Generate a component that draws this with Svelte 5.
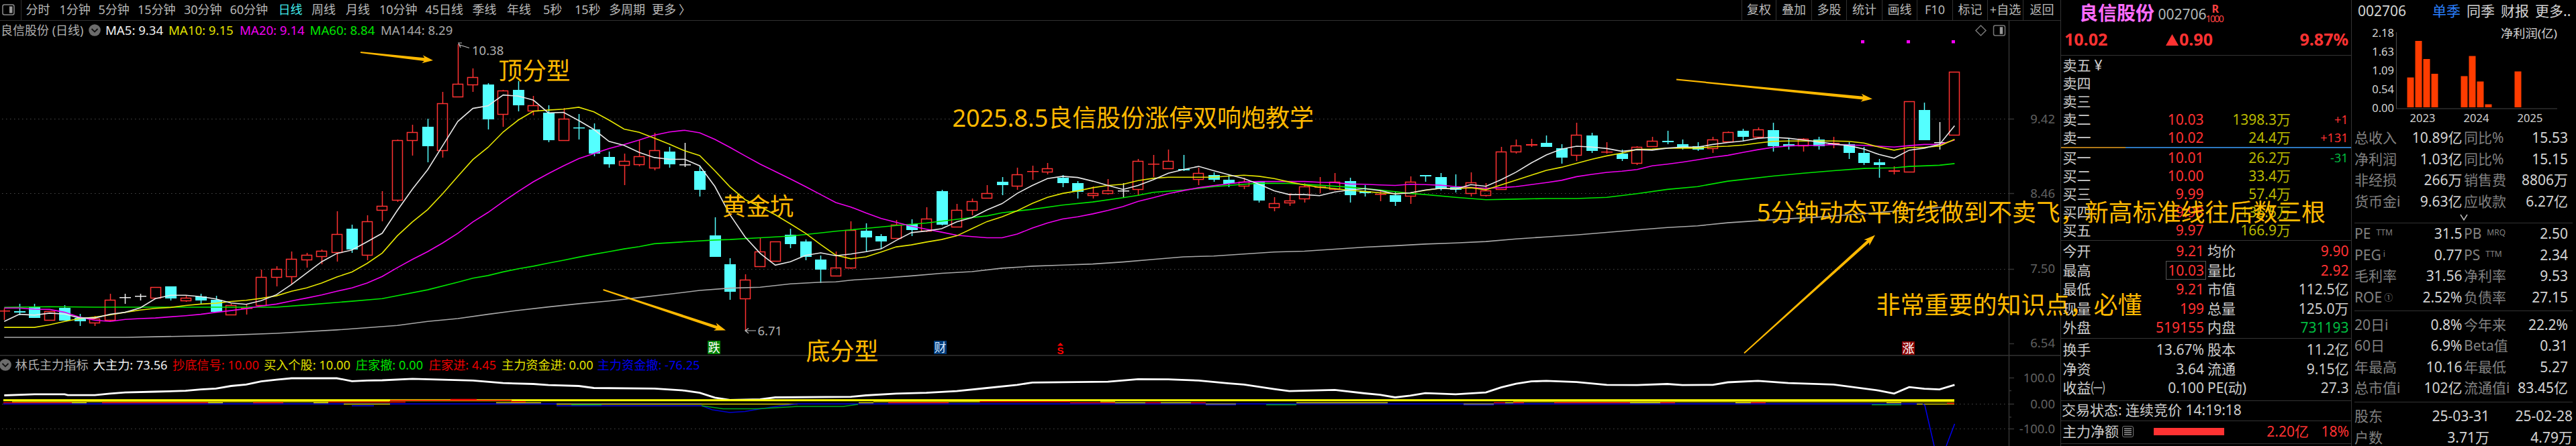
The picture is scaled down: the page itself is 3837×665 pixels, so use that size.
<script>
  const periods = [['分时',50],['1分钟',58],['5分钟',58.5],['15分钟',69],['30分钟',68.5],['60分钟',72],['日线',49.5],['周线',51],['月线',50],['10分钟',68.5],['45日线',70],['季线',51.4],['年线',54],['5秒',47],['15秒',51],['多周期',64],['更多',40],['〉',20]];
  const tools = [['复权',51],['叠加',53],['多股',52],['统计',53],['画线',52],['F10',53],['标记',52],['+自选',53],['返回',56]];
  const averages = [['MA5: 9.34','#f0f0f0',94],['MA10: 9.15','#e0e000',106],['MA20: 9.14','#f000f0',104.6],['MA60: 8.84','#00e600',105.4],['MA144: 8.29','#a8a8a8',120]];
  const signals = [['林氏主力指标','#b0b0b0',116.3],['大主力: 73.56','#f0f0f0',118.2],['抄底信号: 10.00','#e60000',136],['买入个股: 10.00','#e0e000',136.8],['庄家撤: 0.00','#00e600',109],['庄家进: 4.45','#f00000',108.2],['主力资金进: 0.00','#e0e000',142.6],['主力资金撤: -76.25','#0000f0',170]];

  // The plot is laid out on a vertical grid of 2.358 units per pixel, one slot per trading day.
  const Y = 2.358;
  const px = (i) => 6.3 + 22.52 * i;
  const py = (v) => v / Y;

  // kind high low bodyTop bodyBottom
  const raw = `r 1085 1125 1091 1095|c 1068 1108 1094 1100|c 1068 1118 1081 1117|r 1094 1124 1094 1124|c 1072 1128 1082 1127|c 1104 1145 1118 1130|r 1110 1145 1119 1135|r 1033 1130 1055 1124|w 1032 1068 1045 1045|w 1032 1056 1039 1039|r 1010 1047 1010 1047|c 1008 1056 1008 1049|r 1038 1060 1046 1056|c 1033 1068 1043 1056|c 1041 1098 1054 1096|r 1068 1106 1074 1106|r 1070 1106 1083 1083|r 947 1075 974 1074|r 937 1008 945 975|r 884 1000 910 971|r 890 940 896 912|r 876 930 882 900|r 743 919 822 886|c 789 890 803 877|r 757 915 779 897|r 673 777 723 738|r 491 710 493 702|r 439 547 465 494|c 417 570 446 513|r 322 554 362 529|r 155 342 294 339|r 241 324 270 296|c 293 456 297 420|r 315 445 319 402|c 285 392 315 371|r 337 405 371 388|c 371 501 397 492|r 380 494 418 494|c 400 490 447 447|c 435 550 454 540|c 534 590 552 577|r 539 650 567 579|r 493 585 549 577|r 467 600 528 590|c 516 590 534 577|w 502 586 578 578|c 583 692 601 668|c 764 902 828 902|c 908 1053 930 1025|r 965 1160 984 1049|r 837 936 885 936|r 850 918 850 918|c 803 873 825 858|c 842 915 849 902|c 898 996 912 947|r 884 968 942 968|r 779 946 808 942|c 785 886 811 834|c 824 875 831 848|r 774 838 791 837|c 771 830 788 809|r 729 816 768 811|c 667 792 672 791|r 718 799 737 798|r 698 757 708 738|r 651 695 680 695|c 622 686 640 650|r 590 668 613 653|r 583 632 602 602|r 573 614 591 604|c 615 658 626 643|c 637 697 644 674|r 655 699 678 685|r 630 684 669 678|w 644 694 669 669|r 558 688 567 664|r 545 622 575 578|r 527 594 567 591|c 545 601 595 600|r 590 650 609 629|c 607 640 616 632|c 613 657 633 646|r 624 665 640 654|c 640 711 640 706|r 694 742 715 728|r 680 724 705 713|r 644 711 656 699|r 622 679 656 660|r 608 670 638 664|c 626 711 637 685|c 650 690 673 678|r 671 707 681 684|c 671 725 685 710|r 619 717 638 688|c 616 640 616 621|c 608 669 622 665|c 612 676 657 668|r 605 690 641 678|r 644 690 670 685|r 516 668 532 666|r 490 541 511 533|r 488 516 507 511|c 477 516 502 516|c 506 576 520 555|r 431 566 475 544|c 467 538 477 530|r 499 540 532 536|c 527 565 541 558|r 513 580 517 572|r 481 516 496 515|c 460 508 495 501|c 490 525 506 519|c 499 530 514 526|r 481 538 491 522|r 462 500 465 497|c 453 497 460 480|r 449 485 454 480|c 431 533 457 513|c 487 527 506 514|r 485 533 489 512|c 481 525 491 515|r 481 522 502 506|c 499 559 506 538|c 516 579 538 572|c 559 626 570 579|r 585 614 600 604|r 355 603 355 603|c 361 494 386 492|w 428 526 500 500|r 252 477 253 475`;
  const tone = { r: '#ff3232', c: '#54ffff', w: '#f0f0f0' };
  const candles = raw.split('|').map((s, i) => {
    const [k, h, l, t, b] = s.split(' ');
    const top = Math.round(py(+t)), bot = Math.round(py(+b));
    return { k, x: Math.round(px(i)), hi: Math.round(py(+h)), lo: Math.round(py(+l)), top, bot, color: tone[k] };
  });

  const dense = (s) => s.split(' ').map((v, i) => `${px(i).toFixed(1)},${py(+v).toFixed(1)}`).join(' ');
  const sparse = (s) => s.split(' ').map((p) => { const [i, v] = p.split(':'); return `${px(+i).toFixed(1)},${py(+v).toFixed(1)}`; }).join(' ');

  const ma5 = dense('1130 1105 1108 1101 1104 1118 1118 1105 1098 1082 1050 1038 1038 1043 1051 1065 1070 1057 1036 1000 960 920 891 879 850 820 740 665 597 512 427 381 372 334 338 352 397 395 424 455 497 511 536 554 560 560 583 655 755 833 891 932 920 898 889 899 893 885 875 845 818 812 804 780 765 738 716 680 652 628 620 624 637 652 666 652 632 609 596 585 600 614 628 648 671 684 684 688 675 668 663 670 682 678 668 662 665 649 655 632 605 573 545 524 514 517 522 532 526 528 521 517 517 508 501 496 486 483 486 492 499 506 512 524 543 556 528 521 508 442');
  const ma10 = dense('1151 1151 1151 1142 1130 1120 1115 1107 1098 1090 1084 1081 1074 1069 1066 1060 1056 1049 1040 1024 1012 995 974 956 926 890 829 780 737 681 620 561 518 464 422 391 387 384 377 393 422 454 465 486 507 530 547 600 657 702 727 755 787 820 860 897 910 903 886 868 861 851 842 829 804 779 762 741 715 694 680 671 660 652 648 635 627 623 623 623 623 619 616 620 628 640 650 658 663 669 673 678 681 678 669 662 663 660 667 650 633 616 599 588 574 560 548 538 525 524 521 521 521 516 514 510 503 497 496 496 496 496 497 503 517 528 518 518 513 490');
  const ma20 = dense('1083 1083 1087 1088 1098 1115 1126 1130 1123 1120 1118 1114 1110 1105 1098 1092 1085 1076 1069 1058 1048 1037 1024 1012 995 972 941 912 885 854 820 780 747 709 673 639 610 583 558 540 522 508 492 475 464 458 467 490 518 548 577 603 629 656 684 712 728 749 768 782 795 806 816 827 832 836 836 823 802 784 770 762 752 740 726 708 695 681 670 660 653 646 640 638 638 638 638 641 642 647 648 650 652 648 649 651 656 659 662 660 656 649 642 634 621 613 606 602 596 583 577 570 562 553 546 536 526 518 513 511 511 508 510 511 514 517 512 508 508 492');
  const ma60 = sparse('0:1081 3:1078 6:1080 18:1080 20:1072 23:1059 25:1050 28:1019 30:992 31:978 32:969 33:956 34:945 35:936 36:925 37:915 38:904 39:894 40:885 41:875 42:867 43:857 45:850 47:844 48:842 50:836 52:830 54:819 55:813 57:803 59:793 61:784 63:771 65:759 66:748 68:736 70:721 72:710 74:695 75:687 76:676 78:668 80:656 82:648 83:644 85:645 87:651 89:658 91:668 93:680 94:684 96:694 98:702 100:700 102:698 104:698 106:694 108:681 110:666 112:656 114:637 115:631 117:619 119:609 121:600 123:592 125:590 126:585 128:581 129:575');
  const ma144 = sparse('0:1186 8:1186 10:1184 14:1180 18:1172 22:1160 26:1144 28:1130 30:1120 32:1105 34:1091 36:1079 38:1068 40:1058 42:1046 44:1034 46:1021 48:1013 50:1010 52:998 54:992 55:991 56:985 58:978 60:970 62:961 64:955 66:943 68:936 70:932 72:928 74:921 76:912 78:903 80:900 82:893 84:886 86:883 88:876 90:869 92:864 94:858 96:854 98:849 100:840 102:833 104:826 106:817 108:808 110:800 112:794 114:783 116:776 118:769 120:763 122:755 124:747 126:738 128:729 129:724');
  const power = sparse('0:1390 2:1386 4:1386 4.2:1389 6:1389 7:1384 8:1380 10:1377 12:1374 13:1369 14:1366 15:1357 16:1352 17:1341 18:1335 19:1330 22:1330 23:1340 24:1338 25:1337 27:1332 29:1335 31:1338 33:1347 35:1350 36:1354 38:1357 39:1364 43:1366 45:1373 46:1381 47:1398 48:1406 50:1404 51:1397 56:1395 57:1390 59:1384 61:1381 63:1375 65:1364 67:1353 68:1345 73:1342 75:1333 77:1334 79:1338 81:1348 82:1352 84:1368 85:1375 88:1371 90:1383 91:1388 92:1397 93:1391 94:1382 96:1386 98:1380 99:1362 100:1349 101:1341 102:1339 104:1343 106:1353 108:1354 110:1350 111:1354 113:1353 114:1344 116:1339 118:1347 121:1352 124:1373 125:1384 126:1361 127:1367 128:1369 129:1353');

  // x1 x2 y colour
  const strips = [[5,107,600.5,'r'],[18,580,599,'y'],[152,310,600.5,'r'],[107,129,600.5,'y'],[310,332,600.5,'y'],[377,422,600.5,'r'],[467,489,600.5,'y'],[489,604,599.5,'r'],[512,581,602.5,'y'],[524,557,605,'b'],[581,762,597,'r'],[671,710,595.5,'r'],[739,806,600.5,'y'],[761,783,599,'r'],[829,1188,602.5,'y'],[829,1045,605,'b'],[851,896,603.5,'g'],[1279,1301,600.5,'y'],[1301,1460,599,'y'],[1323,1413,600.5,'r'],[1459,1594,599,'r'],[1594,1661,600.5,'r'],[1639,1661,599,'y'],[1661,1706,600.5,'y'],[1706,1729,600.5,'r'],[1729,1774,600.5,'y'],[1774,1796,600.5,'r'],[1796,1841,602.5,'y'],[1796,1841,603.5,'b'],[1886,1931,603.5,'g'],[1931,2067,600.5,'y'],[2180,2225,602.5,'y'],[2180,2225,603.5,'b'],[2225,2242,600.5,'r'],[2242,2254,600.5,'y'],[2254,2911,599,'y'],[2254,2270,600.5,'r'],[2315,2428,600.5,'r'],[2428,2473,600.5,'y'],[2473,2495,600.5,'r'],[2585,2608,600.5,'y'],[2608,2630,600.5,'r'],[2788,2832,603.5,'g'],[2810,2832,600.5,'y'],[2855,2911,602.5,'y'],[2900,2911,601.5,'r']];
  const ink = { r: '#f00000', y: '#d8d000', b: '#0000e8', g: '#00a820' };

  const axis = [[177,'9.42'],[288,'8.46'],[400.5,'7.50'],[511.5,'6.54'],[563,'100.0'],[602,'0.00'],[639.5,'-100.0']];
  const notes = [[742.5,119,'顶分型',107],[1075.5,320.5,'黄金坑',107],[1200.5,536.5,'底分型',108],[1418.5,189,'2025.8.5良信股份涨停双响炮教学',538.5],[2617,329.5,'5分钟动态平衡线做到不卖飞，新高标准线往后数三根',847],[2794.5,467.5,'非常重要的知识点，必懂',396]];
  const arrows = [[537,78,645,90,6,16],[898.5,432,1081,492.5,6,17],[2497,118.5,2789,147.5,6,17],[2598,526.5,2793,350.5,6,17]];
  const arrowPath = ([x1, y1, x2, y2, w, h]) => {
    const d = Math.hypot(x2 - x1, y2 - y1), u = (x2 - x1) / d, v = (y2 - y1) / d;
    const p = (a, b) => `${(x1 + u * a - v * b).toFixed(1)} ${(y1 + v * a + u * b).toFixed(1)}`;
    return `M${p(0, -0.9)}L${p(d - h + 3, -w / 2 + 0.7)}L${p(d - h, -w)}L${p(d, 0)}L${p(d - h, w)}L${p(d - h + 3, w / 2 - 0.7)}L${p(0, 0.9)}Z`;
  };

  const asks = [['卖五','','',''],['卖四','','',''],['卖三','','',''],['卖二','10.03','1398.3万','+1'],['卖一','10.02','24.4万','+131']];
  const bids = [['买一','10.01','26.2万','-31'],['买二','10.00','33.4万',''],['买三','9.99','57.4万',''],['买四','9.98','136.5万',''],['买五','9.97','166.9万','']];
  const statsA = [['今开','9.21','r','均价','9.90','r'],['最高','10.03','r box','量比','2.92','r'],['最低','9.21','r','市值','112.5亿',''],['现量','199','r','总量','125.0万',''],['外盘','519155','r','内盘','731193','g']];
  const statsB = [['换手','13.67%','','股本','11.2亿',''],['净资','3.64','','流通','9.15亿',''],['收益㈠','0.100','','PE(动)','27.3','']];

  const finA = [['总收入','','10.89亿','同比%','','15.53'],['净利润','','1.03亿','同比%','','15.15'],['非经损','','266万','销售费','','8806万'],['货币金i','','9.63亿','应收款','','6.27亿']];
  const finB = [['PE','TTM','31.5','PB','MRQ','2.50'],['PEG','i','0.77','PS','TTM','2.34'],['毛利率','','31.56','净利率','','9.53'],['ROE','①','2.52%','负债率','','27.15']];
  const finC = [['20日i','','0.8%','今年来','','22.2%'],['60日','','6.9%','Beta值','','0.31'],['年最高','','10.16','年最低','','5.27'],['总市值i','','102亿','流通值i','','83.45亿']];
  const bars = [[82,67],[94,12.5],[106,39.5],[118,61.5],[162,65],[174,35],[186,73],[198,107],[242,58]];
</script>

{#snippet finRows(rows)}
  {#each rows as [a, as, av, b, bs, bv]}
    <div class="frow"><span class="fl">{a}{#if as}<sup class:tight={as === 'i' || as === '①'} class:ring={as === '①'}>{as}</sup>{/if}</span><span class="fv">{av}</span><span class="fl">{b}{#if bs}<sup>{bs}</sup>{/if}</span><span class="fv">{bv}</span></div>
  {/each}
{/snippet}

{#snippet chevron()}
  <svg class="chev" width="18" height="18" viewBox="0 0 18 18"><circle cx="9" cy="9" r="8.8" fill="#6c6c6c"/><path d="M4.5 7L9 11.5L13.5 7" fill="none" stroke="#111" stroke-width="1.8"/></svg>
{/snippet}

<main>
  <section class="market">
    <nav>
      <div class="panel-icon"><svg width="19" height="17" viewBox="0 0 19 17"><rect x="1" y="1" width="17" height="15" rx="2.5" fill="none" stroke="#8a8a8a" stroke-width="1.5"/><rect x="11" y="3.5" width="4.5" height="10" fill="#9a9a9a"/></svg></div>
      <div class="periods">
        {#each periods as [label, w]}<span class:active={label === '日线'} style:width="{w}px">{label}</span>{/each}
      </div>
      <div class="tools">
        {#each tools as [label, w]}<span style:width="{w}px">{label}</span>{/each}
      </div>
    </nav>

    <div class="stage">
      <svg class="plot" width="3069" height="634" viewBox="0 31 3069 634">
        <g stroke="#4a4a4a" stroke-width="1" stroke-dasharray="1.5 4.5">
          <path d="M3 177.5H2992M3 288.5H2992M3 401.5H2992M3 602.5H2992M3 639.5H2992"/>
        </g>
        <g stroke="#333" stroke-width="1.5" fill="none">
          <path d="M0 530H3069M2992.5 31V665"/>
          <path d="M2993 177.5H3000M2993 288.5H3000M2993 401.5H3000M2993 512.5H3000M2993 563.5H3000M2993 582.5H2996M2993 602.5H3000M2993 622H2996M2993 639.5H3000"/>
        </g>
        {#each candles as c}
          <g stroke={c.color} fill="none" stroke-width="1.5">
            {#if c.k === 'r' && c.bot - c.top > 2}
              <path d="M{c.x + 0.5} {c.hi}V{c.top}M{c.x + 0.5} {c.bot}V{c.lo}"/>
              <rect x={c.x - 7.5} y={c.top + 0.5} width="15" height={c.bot - c.top}/>
            {:else}
              <path d="M{c.x + 0.5} {c.hi}V{c.lo}"/>
              <rect x={c.x - 8} y={c.top} width="17" height={Math.max(1.5, c.bot - c.top)} fill={c.color} stroke="none"/>
            {/if}
          </g>
        {/each}
        <g fill="none" stroke-width="1.6">
          <polyline points={ma144} stroke="#a8a8a8"/>
          <polyline points={ma60} stroke="#00e600"/>
          <polyline points={ma20} stroke="#f000f0"/>
          <polyline points={ma10} stroke="#e6e600"/>
          <polyline points={ma5} stroke="#e8e8e8"/>
        </g>
        <g fill="#f0f"><rect x="2772" y="60" width="5" height="4.5"/><rect x="2840" y="60" width="5" height="4.5"/><rect x="2907" y="60" width="5" height="4.5"/></g>
        <g stroke="#c0c0c0" fill="none" stroke-width="1.2">
          <path d="M699 71.5L683 66.5M688 64H683L686 71"/>
          <path d="M1126 493H1110M1115 489.5L1110 493L1115 497"/>
        </g>
        <text x="703" y="81.5" class="mark">10.38</text>
        <text x="1128.5" y="500" class="mark">6.71</text>

        <rect x="1054" y="508" width="19" height="20" fill="#008000"/><text x="1063.5" y="525" class="tag">跌</text>
        <rect x="1391" y="508" width="19" height="20" fill="#003a78"/><text x="1400.5" y="525" class="tag blue">财</text>
        <rect x="2833" y="509" width="19" height="20" fill="#8b0000"/><text x="2842.5" y="526" class="tag">涨</text>
        <path d="M1575 515.5L1579.5 511L1584 515.5Z" fill="red"/><text x="1579.5" y="528" class="dollar">S</text>

        <polyline points={power} fill="none" stroke="#fff" stroke-width="2.8"/>
        <path d="M5 602.3H1045M1188 602.3H2864" stroke="#0000f0" stroke-width="1.5"/>
        <path d="M5 596.8H2911" stroke="#ff0" stroke-width="3"/>
        {#each strips as [a, b, y, c]}<path d="M{a} {y}H{b}" stroke={ink[c]} stroke-width="1.5"/>{/each}
        <g fill="none" stroke-width="1.5">
          <path d="M1045 605L1061 611L1087 615L1110 613.5L1130 610L1163 605L1188 602.3" stroke="#0000d0"/>
          <path d="M1045 605L1077 609.5H1127L1155 608L1188 606H1256L1278 603" stroke="#00a820"/>
          <path d="M2864 602.3L2867 604L2881 665M2899 665L2911.5 632" stroke="#0000f0"/>
        </g>
        <g fill="none" stroke="#777" stroke-width="1.5">
          <path d="M2943 45.5L2950.5 38L2958 45.5L2950.5 53Z"/>
          <rect x="2969.5" y="38" width="17" height="15" rx="2.5"/><rect x="2979.5" y="41" width="3" height="9" fill="#999" stroke="#999"/>
        </g>
        {#each axis as [y, t]}<text x="3061" y={y + 6.5} class="axis">{t}</text>{/each}
      </svg>

      <div class="legend">
        <span class="name">良信股份 (日线)</span>{@render chevron()}
        {#each averages as [t, c, w]}<span style:color={c} style:width="{w}px">{t}</span>{/each}
      </div>
      <div class="legend sub">
        {@render chevron()}
        {#each signals as [t, c, w]}<span style:color={c} style:width="{w}px">{t}</span>{/each}
      </div>
    </div>
  </section>

  <section class="quote">
    <header>
      <div class="title"><b>良信股份</b><span>002706</span><small><b>R</b><i>1000</i></small></div>
      <div class="price"><b>10.02</b><b class="chg"><svg width="19" height="17" viewBox="0 0 19 17"><path d="M0 17L9.5 0L19 17Z" fill="#ff3232"/></svg>0.90</b><b class="pct">9.87%</b></div>
    </header>
    <div class="book">
      {#each asks as [l, p, v, d], i}<div class="brow"><span>{l}{#if i === 0}<em>¥</em>{/if}</span><span class="r">{p}</span><span class="vol">{v}</span><span class="r delta">{d}</span></div>{/each}
    </div>
    <div class="ratio"></div>
    <div class="book bids">
      {#each bids as [l, p, v, d]}<div class="brow"><span>{l}</span><span class="r">{p}</span><span class="vol">{v}</span><span class="g delta">{d}</span></div>{/each}
    </div>
    <div class="stats a">
      {#each statsA as [a, av, ac, b, bv, bc]}<div class="srow"><span>{a}</span><span class="v"><i class={ac}>{av}</i></span><span>{b}</span><span class="v"><i class={bc}>{bv}</i></span></div>{/each}
    </div>
    <div class="stats b">
      {#each statsB as [a, av, ac, b, bv, bc]}<div class="srow"><span>{a}</span><span class="v"><i class={ac}>{av}</i></span><span>{b}</span><span class="v"><i class={bc}>{bv}</i></span></div>{/each}
    </div>
    <div class="status">交易状态: 连续竞价 14:19:18</div>
    <div class="flow">
      <span>主力净额</span>
      <svg width="19" height="19" viewBox="0 0 19 19"><rect x="1.5" y="1.5" width="16" height="16" rx="2.5" fill="none" stroke="#777"/><path d="M4 5H15M4 8H15M4 11H15M4 14H15" stroke="#999" stroke-width="1.3"/></svg>
      <div class="meter"></div><span class="amount">2.20亿</span><span class="share">18%</span>
    </div>
  </section>

  <aside>
    <div class="ftabs"><span class="code">002706</span><span class="on">单季</span><span>同季</span><span>财报</span><span>更多..</span></div>
    <svg class="profit" width="333" height="156" viewBox="0 0 333 156">
      <path d="M66.5 16V130H306" fill="none" stroke="#444" stroke-width="1.2"/>
      {#each ['2.18','1.63','1.09','0.54','0.00'] as t, i}<text x="63" y={22.5 + i * 28.1} text-anchor="end">{t}</text>{/each}
      <text x="306" y="24" text-anchor="end" textLength="84" lengthAdjust="spacingAndGlyphs">净利润(亿)</text>
      {#each bars as [x, t]}<rect x={x + 0.5} y={t + 16.5} width="10" height={111.5 - t} fill="#ff3c00"/>{/each}
      {#each ['2023','2024','2025'] as t, i}<text x={105.5 + i * 80} y="150" text-anchor="middle">{t}</text>{/each}
    </svg>
    <div class="fin">{@render finRows(finA)}</div>
    <svg class="more" width="12" height="10" viewBox="0 0 12 10"><path d="M1 1L6 9L11 1" fill="none" stroke="#bbb" stroke-width="1.5"/></svg>
    <div class="fin lined">{@render finRows(finB)}</div>
    <div class="fin lined c">{@render finRows(finC)}</div>
    <div class="fin lined d">
      <div class="hrow"><span class="fl">股东</span><span>25-03-31</span><span>25-02-28</span></div>
      <div class="hrow"><span class="fl">户数</span><span>3.71万</span><span>4.79万</span></div>
    </div>
  </aside>

  <svg class="overlay" width="3837" height="665" viewBox="0 0 3837 665">
    {#each arrows as a}<path d={arrowPath(a)} fill="#ffb900"/>{/each}
    {#each notes as [x, y, t, w]}<text {x} {y} textLength={w} lengthAdjust="spacingAndGlyphs">{t}</text>{/each}
  </svg>
</main>

<style>
  :global(body) { background: #000; overflow: hidden; }
  main { position: relative; display: flex; width: 3837px; height: 665px; background: #000; color: #ccc; font: 18px/1 "Noto Sans", "Noto Sans CJK SC", sans-serif; overflow: hidden; white-space: nowrap; }
  .market { width: 3069px; flex: none; display: flex; flex-direction: column; }
  nav { box-sizing: border-box; height: 31px; display: flex; align-items: stretch; border-bottom: 1px solid #303030; color: #b8b8b8; line-height: 28px; }
  .panel-icon { box-sizing: border-box; width: 32px; border-right: 1px solid #303030; padding: 6px 0 0 3px; line-height: 0; }
  .periods { flex: 1; display: flex; padding-left: 6.5px; }
  .periods span { flex: none; }
  .periods .active { color: #40e8e8; }
  .tools { display: flex; }
  .tools span { box-sizing: border-box; border-left: 1px solid #303030; text-align: center; }
  .stage { position: relative; height: 634px; }
  .plot { display: block; }
  .legend { position: absolute; left: 1px; top: 3px; display: flex; align-items: center; height: 22px; line-height: 22px; font-size: 18.6px; }
  .legend span { flex: none; }
  .legend .name { width: 131px; color: #b0b0b0; font-size: 18px; }
  .chev { flex: none; margin-right: 7px; }
  .sub { left: -1px; top: 501.5px; font-size: 18.2px; }
  .sub .chev { margin-right: 5.5px; }
  .mark { font-size: 18.5px; fill: #b0b0b0; }
  .axis { font-size: 18.5px; fill: #606060; text-anchor: end; }
  .tag { font-size: 18px; fill: #fff; text-anchor: middle; }
  .tag.blue { fill: #cfe4ff; }
  .dollar { font: bold 15px "Liberation Sans", sans-serif; fill: red; text-anchor: middle; }

  .quote { box-sizing: border-box; width: 434px; flex: none; border-left: 1.5px solid #333; border-right: 1.5px solid #333; font-size: 21px; display: flex; flex-direction: column; }
  .quote header { box-sizing: border-box; height: 83px; border-bottom: 1px solid #333; }
  .title { display: flex; padding: 5px 0 0 27px; height: 37px; box-sizing: border-box; line-height: 32px; }
  .title > b { color: #ff6cff; font-size: 28px; font-weight: 700; width: 117.5px; line-height: 28px; }
  .title > span { font-size: 21px; line-height: 33px; width: 71px; color: #b0b8b8; }
  .title small { display: flex; flex-direction: column; color: #ff4040; line-height: 14px; }
  .title small b { font-size: 16px; padding-left: 9px; height: 15px; line-height: 17px; }
  .title small i { font-style: normal; font-size: 14px; letter-spacing: -1.6px; line-height: 16px; }
  .price { display: grid; grid-template-columns: 151px 150px 1fr; padding: 2px 4px 0 5px; font-size: 25px; line-height: 38px; color: #ff3232; }
  .chg svg { margin-right: 1px; }
  .pct { text-align: right; }
  .r { color: #ff3232; }
  .g { color: #00bc40; }
  .book { height: 135px; padding-top: 1px; }
  .bids { height: 136px; padding-top: 1px; }
  .brow { display: grid; grid-template-columns: 60px 150px 129.5px 85.5px; height: 27px; line-height: 27px; padding-left: 2.5px; }
  .brow span + span { text-align: right; }
  .brow em { font-style: normal; margin-left: 5px; }
  .brow .vol { color: #b8b800; }
  .brow .delta { font-size: 18px; }
  .ratio { height: 2px; background: linear-gradient(90deg, #b07818 96px, #2c78c0 96px); }
  .stats { border-top: 1.5px solid #333; box-sizing: border-box; padding-top: 1px; }
  .stats.a { height: 146px; }
  .stats.b { height: 93px; padding-top: 2px; }
  .srow { display: grid; grid-template-columns: 70px 140.5px 85px 130.5px; height: 28.6px; line-height: 28.6px; padding-left: 2.5px; }
  .srow span:nth-child(3) { padding-left: 5px; }
  .srow .v { text-align: right; }
  .srow i { font-style: normal; }
  .srow .box { outline: 1.5px solid #555; outline-offset: 0; display: inline-block; height: 26px; line-height: 26px; padding: 0 2px; margin-right: -2px; }
  .status { box-sizing: border-box; height: 30px; border-top: 1.5px solid #333; line-height: 27px; padding-left: 1px; }
  .flow { box-sizing: border-box; height: 35px; border-top: 1.5px solid #333; border-bottom: 1.5px solid #333; display: flex; align-items: center; padding: 0 3px 3px 2px; }
  .flow svg { margin-left: 4px; }
  .meter { width: 105px; height: 11px; background: #ff3232; margin-left: 29px; }
  .flow .amount { color: #ff3232; width: 126px; text-align: right; }
  .flow .share { color: #ff3232; flex: 1; text-align: right; }

  aside { flex: 1; display: flex; flex-direction: column; font-size: 21px; color: #d4d4d4; min-width: 0; }
  .ftabs { display: flex; height: 32px; line-height: 32px; padding-left: 9px; }
  .ftabs span { width: 51px; flex: none; }
  .ftabs .code { width: 111px; }
  .ftabs .on { color: #2a80ff; }
  .profit { display: block; flex: none; }
  .profit text { font-size: 16.5px; fill: #d4d4d4; }
  .fin { padding: 2px 8px 0 4px; box-sizing: border-box; }
  .frow { display: grid; grid-template-columns: 80px 80.5px 76px 81.5px; height: 31.5px; line-height: 31.5px; }
  .frow .fv { display: flex; justify-content: flex-end; }
  .frow .fl:nth-child(3) { padding-left: 2.5px; }
  .frow .fl, .hrow .fl { color: #808080; }
  sup { font-size: 12px; line-height: 0; vertical-align: 5px; margin-left: 8px; }
  sup.tight { margin-left: 3px; }
  sup.ring { vertical-align: 3px; font-size: 13px; }
  .more { display: block; margin: 3px auto 0 161px; height: 10px; flex: none; }
  .lined { position: relative; border-top: 1.5px solid #333; margin: 3px 5px 0 4px; padding: 0 3px 0 0; height: 130.5px; flex: none; }
  .lined.c { margin-top: 0; height: 136.5px; padding-top: 5px; }
  .lined.d { margin-top: 0; height: 66px; padding: 5px 0 0; }
  .hrow { display: grid; grid-template-columns: 60px 141px 124px; height: 31.5px; line-height: 31.5px; }
  .hrow span + span { text-align: right; }

  .overlay { position: absolute; inset: 0; pointer-events: none; }
  .overlay text { font-size: 36px; fill: #ffb900; }
</style>
